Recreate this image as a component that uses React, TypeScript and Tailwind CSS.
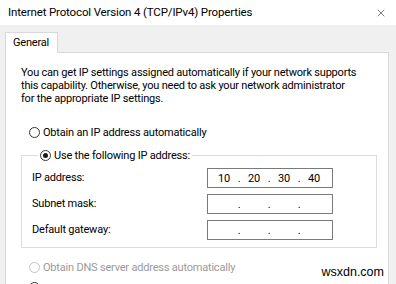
import { X } from "lucide-react";

type RadioProps = {
  label?: string;
  checked?: boolean;
  disabled?: boolean;
};

function Radio({ label, checked, disabled }: RadioProps) {
  return (
    <label className="flex items-center gap-[3px] h-[13px] leading-[13px]">
      <span
        className={`w-[11px] h-[11px] rounded-full border bg-white flex items-center justify-center ${
          disabled ? "border-[#c4c4c4]" : "border-[#333333]"
        }`}
      >
        {checked && <span className="w-[5px] h-[5px] rounded-full bg-[#1a1a1a]" />}
      </span>
      {label && (
        <span className={disabled ? "text-[#9a9a9a]" : "text-black"}>{label}</span>
      )}
    </label>
  );
}

function IpBox({ parts }: { parts: string[] }) {
  return (
    <div className="w-[126px] h-[20px] border border-[#7a7a7a] bg-white flex items-center pl-[5px] leading-none">
      {parts.map((p, i) => (
        <div key={i} className="flex items-center">
          <span className="w-[22px] text-center">{p}</span>
          {i < 3 && <span className="w-[8px] text-center">.</span>}
        </div>
      ))}
    </div>
  );
}

const rows = [
  { label: "IP address:", parts: ["10", "20", "30", "40"] },
  { label: "Subnet mask:", parts: ["", "", "", ""] },
  { label: "Default gateway:", parts: ["", "", "", ""] },
];

export default function App() {
  return (
    <div
      className="relative w-[396px] h-[284px] overflow-hidden flex flex-col bg-[#f0f0f0] text-[11px] tracking-[-0.2px] text-black"
      style={{ fontFamily: 'Roboto, "Noto Sans", sans-serif' }}
    >
      <div className="h-[25px] shrink-0 bg-white flex items-center justify-between pl-[8px] pr-[9px]">
        <span className="text-[11.5px] tracking-[-0.15px] leading-none">
          Internet Protocol Version 4 (TCP/IPv4) Properties
        </span>
        <X className="w-[12px] h-[12px] text-[#111]" strokeWidth={1.1} />
      </div>

      <div className="flex-1 flex flex-col pt-[7px] pl-[5px] pr-[7px]">
        <div className="flex">
          <div className="relative z-10 -mb-px h-[21px] w-[53px] bg-white border-x border-t border-[#d9d9d9] pl-[7px] flex items-center">
            General
          </div>
        </div>

        <div className="flex-1 bg-white border border-[#d9d9d9] pl-[15px] pr-[11px] pt-[13px]">
          <p className="leading-[13px] whitespace-nowrap">
            You can get IP settings assigned automatically if your network supports
            <br />
            this capability. Otherwise, you need to ask your network administrator
            <br />
            for the appropriate IP settings.
          </p>

          <div className="mt-[21px] ml-[8px]">
            <Radio label="Obtain an IP address automatically" />
          </div>

          <fieldset className="mt-[10px] border border-[#dcdcdc] pl-[10px] pb-[7px]">
            <legend className="ml-[6px] px-[2px]">
              <Radio label="Use the following IP address:" checked />
            </legend>
            <div className="mt-[6px] flex flex-col gap-[6px]">
              {rows.map((r) => (
                <div key={r.label} className="flex items-center">
                  <span className="w-[175px]">{r.label}</span>
                  <IpBox parts={r.parts} />
                </div>
              ))}
            </div>
          </fieldset>

          <div className="mt-[13px] ml-[8px]">
            <Radio label="Obtain DNS server address automatically" disabled />
          </div>
          <div className="mt-[7px] ml-[8px]">
            <Radio checked />
          </div>
        </div>
      </div>

      <span
        className="absolute right-[12px] bottom-[5px] text-[12.5px] tracking-normal leading-[14px] text-black"
        style={{ fontFamily: '"Liberation Sans", Arial, sans-serif' }}
      >
        wsxdn.com
      </span>
    </div>
  );
}
